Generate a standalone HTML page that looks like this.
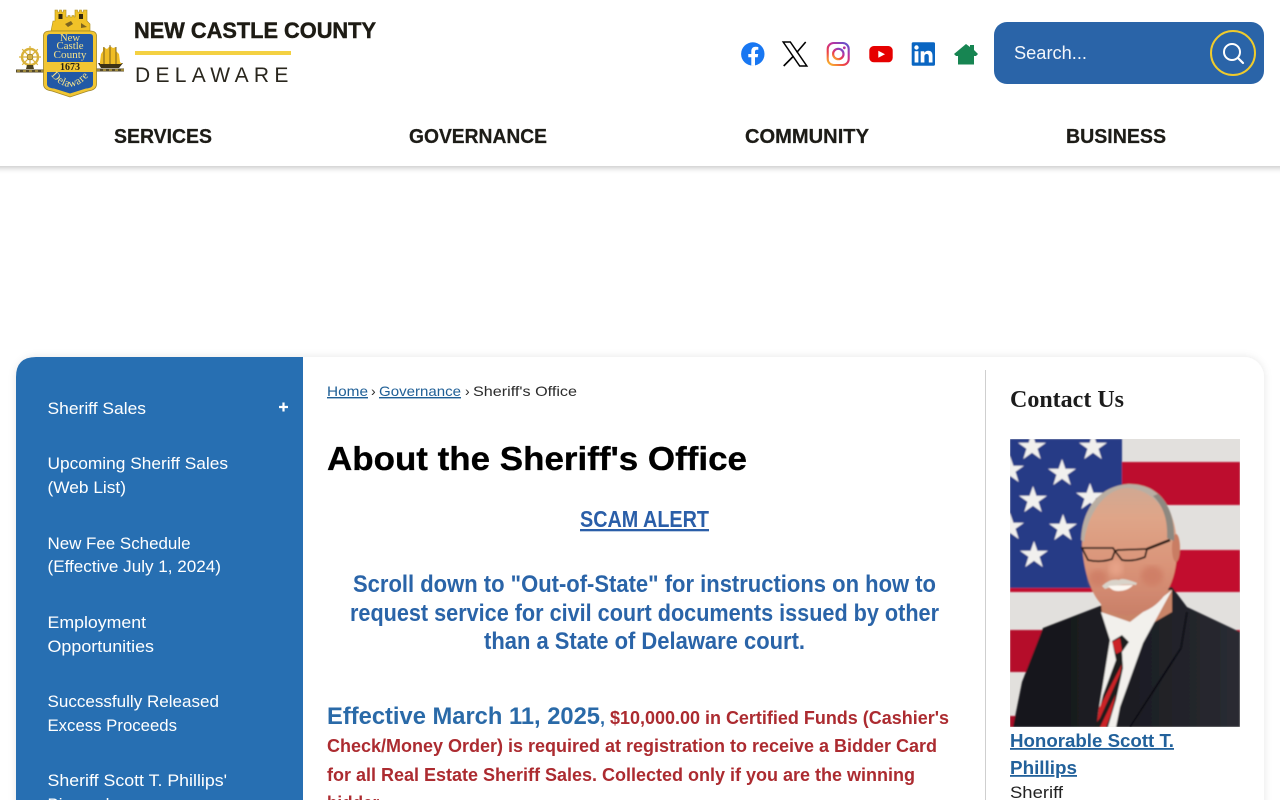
<!DOCTYPE html>
<html lang="en">
<head>
<meta charset="utf-8">
<title>About the Sheriff's Office</title>
<style>
html,body{margin:0;padding:0;width:1280px;height:800px;overflow:hidden;background:#fff}
svg{display:block;position:absolute;left:0;top:0}
text{font-family:"Liberation Sans",sans-serif}
.nav{font-size:20px;font-weight:700;fill:#1d1c17;stroke:#1d1c17;stroke-width:.25px}
.side{font-size:16.5px;fill:#fff}
.crumb{font-size:14px;fill:#2b2b2b}
.link{fill:#1f5f96;text-decoration:underline}
.scroll{font-size:24px;font-weight:700;fill:#2a64a8}
.red{font-size:18px;font-weight:700;fill:#ac2b30}
.hon{font-size:18px;font-weight:700;fill:#22619b;text-decoration:underline}
.serif{font-family:"Liberation Serif",serif}
</style>
</head>
<body>
<svg width="1280" height="800" viewBox="0 0 1280 800" xmlns="http://www.w3.org/2000/svg">
<defs>
<filter id="sh" x="-5%" y="-20%" width="110%" height="140%"><feDropShadow dx="0" dy="2" stdDeviation="3" flood-color="#000" flood-opacity=".22"/></filter>
<filter id="sh2" x="-3%" y="-5%" width="106%" height="110%"><feDropShadow dx="0" dy="0" stdDeviation="4" flood-color="#000" flood-opacity=".10"/></filter>
<filter id="b1"><feGaussianBlur stdDeviation=".8"/></filter>
<filter id="b2"><feGaussianBlur stdDeviation="3"/></filter>
<linearGradient id="ig" x1="0.1" y1="1" x2="0.8" y2="0"><stop offset="0" stop-color="#f9b52d"/><stop offset=".35" stop-color="#ee3f45"/><stop offset=".7" stop-color="#c0309b"/><stop offset="1" stop-color="#6a4fc8"/></linearGradient>
<linearGradient id="face" x1="0" y1="0" x2="0" y2="1"><stop offset="0" stop-color="#cfa893"/><stop offset=".25" stop-color="#dfa588"/><stop offset=".65" stop-color="#d99277"/><stop offset="1" stop-color="#c97f68"/></linearGradient>
<linearGradient id="suit" x1="0" y1="0" x2="1" y2="0"><stop offset="0" stop-color="#15151a"/><stop offset=".6" stop-color="#1e1f25"/><stop offset="1" stop-color="#2a2b32"/></linearGradient>
<clipPath id="photo"><rect x="1010" y="439" width="230" height="288"/></clipPath>
<path id="star" d="M0-14 3.400-4.300 14-4.300 5.500 1.800 8.700 12 0 5.800-8.700 12-5.500 1.800-14-4.300-3.400-4.300Z"/>
<path id="curve" d="M50 74Q70 101 93 71"/>
</defs>

<!-- header -->
<rect x="-10" y="-10" width="1300" height="176" fill="#fff" filter="url(#sh)"/>

<!-- logo -->
<g>
  <rect x="16" y="69.500" width="28" height="3" fill="#54492a"/>
  <path d="M17 71H43" stroke="#e8c64a" stroke-width="1" stroke-dasharray="3 3"/>
  <rect x="96" y="68.500" width="28" height="3" fill="#54492a"/>
  <path d="M97 70H124" stroke="#e8c64a" stroke-width="1" stroke-dasharray="3 3"/>
  <g fill="none" stroke="#d9b23a">
    <circle cx="30" cy="57" r="8" stroke-width="2.400"/>
    <circle cx="30" cy="57" r="2.600" stroke-width="1.400" stroke="#65582a"/>
    <path d="M30 46V68M19 57H41M22.200 49.200 37.800 64.800M37.800 49.200 22.200 64.800" stroke-width="1.200"/>
  </g>
  <path d="M26 69h8l-1-4h-6Z" fill="#4a4020"/>
  <path d="M98 63h25l-4 5h-18Z" fill="#3d3216"/>
  <path d="M100 62 101 54 103 51 103 47 107 49 110 46 113 48 116 47 116 51 119 54 120 62 122 64H100Z" fill="#f0bd25"/>
  <path d="M104 47V64M110 45V64M116 47V64" stroke="#59481c" stroke-width=".8"/>
  <path d="M51 31 53 21H55V10h2.500v2h2v-2h2v2h2v-2H66V17h2v-1.500h2v1.500h2v-1.500h2V17h1V10h2.500v2h2v-2h2v2h2v-2H87V21L90 24V31Z" fill="#f0c228" stroke="#a98c1d" stroke-width=".6"/>
  <rect x="58.500" y="14" width="4" height="5" fill="#33290f"/><rect x="79" y="14" width="4" height="5" fill="#33290f"/>
  <path d="M65 24l6-3 2 3-5 3ZM81 23l6 4-6 1Z" fill="#7b6420"/>
  <path d="M43.500 36Q43.500 31 50 31H90Q96.500 31 96.500 36V84Q96.500 90 88 91L70 97 52 91Q43.500 90 43.500 84Z" fill="#f2c632" stroke="#9f8526" stroke-width=".8"/>
  <path d="M47 37Q47 34 50 34H90Q93 34 93 37V62H47Z" fill="#2259a6"/>
  <path d="M47 72H93V84Q93 88 86 88.500L70 93.500 54 88.500Q47 88 47 84Z" fill="#2259a6"/>
  <g text-anchor="middle">
    <text x="70" y="41" class="serif" font-size="10.500" fill="#f4e28b" textLength="20" lengthAdjust="spacingAndGlyphs">New</text>
    <text x="70" y="49" class="serif" font-size="10.500" fill="#f4e28b" textLength="27" lengthAdjust="spacingAndGlyphs">Castle</text>
    <text x="70" y="58" class="serif" font-size="10.500" fill="#f4e28b" textLength="33" lengthAdjust="spacingAndGlyphs">County</text>
    <text x="70" y="70" class="serif" font-size="10" font-weight="700" fill="#2a2414" textLength="20" lengthAdjust="spacingAndGlyphs">1673</text>
  </g>
  <text class="serif" font-size="11" fill="#f4e28b" letter-spacing=".4"><textPath href="#curve" startOffset="3%">Delaware</textPath></text>

  <text x="134" y="38" font-size="22" font-weight="700" fill="#1d1b14" stroke="#1d1b14" stroke-width=".45" textLength="242" lengthAdjust="spacingAndGlyphs">NEW CASTLE COUNTY</text>
  <rect x="135" y="51" width="156" height="4" fill="#f4d142"/>
  <text x="135" y="82" font-size="21" fill="#29261d" letter-spacing="5.300">DELAWARE</text>
</g>

<!-- social icons -->
<circle cx="752.800" cy="54" r="11.700" fill="#1877f2"/>
<path d="M751.300 65.700V57.300H748.300V54H751.300V51.300C751.300 48.300 753 46.700 755.700 46.700L758.300 47V49.800H756.900C755.500 49.800 755 50.700 755 51.600V54H758.200L757.700 57.300H755V65.700Z" fill="#fff"/>
<path d="M783.200 42H790.300L806.800 66H799.700Z" fill="none" stroke="#000" stroke-width="1.500"/>
<path d="M805.700 42 796.700 52.500M793.600 56 783.700 66" fill="none" stroke="#000" stroke-width="1.600"/>
<rect x="827.700" y="43" width="21" height="22" rx="6" fill="none" stroke="url(#ig)" stroke-width="2.100"/>
<circle cx="838.300" cy="54" r="5.200" fill="none" stroke="url(#ig)" stroke-width="2.200"/>
<circle cx="844.300" cy="47.800" r="1.400" fill="#b6319f"/>
<rect x="869.300" y="46" width="23.400" height="16.300" rx="4.500" fill="#e60000"/>
<path d="M878.300 50.700 885 54.200 878.300 57.700Z" fill="#fff"/>
<rect x="911.700" y="42.300" width="23.300" height="23.400" rx="1.500" fill="#0a66c2"/>
<rect x="914.600" y="51.200" width="3.800" height="11.300" fill="#fff"/>
<circle cx="916.500" cy="47.500" r="2.200" fill="#fff"/>
<path d="M920.700 51.200H924.300V52.900C925.100 51.600 926.400 50.800 928.200 50.800 931.600 50.800 932.500 53 932.500 56V62.500H928.800V56.700C928.800 55.200 928.300 54 926.700 54 925 54 924.400 55.200 924.400 56.700V62.500H920.700Z" fill="#fff"/>
<path d="M966 44 970 47V45H974V50L978 54 976 56H974V64.500H958V56H956L954 54Z" fill="#178552"/>

<!-- search -->
<rect x="994" y="22" width="270" height="62" rx="13" fill="#2a64a8"/>
<text x="1014" y="59" font-size="18" fill="#f3f6fa" textLength="73" lengthAdjust="spacingAndGlyphs">Search...</text>
<circle cx="1233" cy="53" r="22" fill="none" stroke="#f0cb2c" stroke-width="2"/>
<circle cx="1232" cy="52" r="8" fill="none" stroke="#fff" stroke-width="2"/>
<path d="M1238 58 1243 63" stroke="#fff" stroke-width="2.200" stroke-linecap="round"/>

<!-- nav -->
<text class="nav" x="114" y="143" textLength="98" lengthAdjust="spacingAndGlyphs">SERVICES</text>
<text class="nav" x="409" y="143" textLength="138" lengthAdjust="spacingAndGlyphs">GOVERNANCE</text>
<text class="nav" x="745" y="143" textLength="124" lengthAdjust="spacingAndGlyphs">COMMUNITY</text>
<text class="nav" x="1066" y="143" textLength="100" lengthAdjust="spacingAndGlyphs">BUSINESS</text>

<!-- main card -->
<rect x="16" y="357" width="1248" height="480" rx="20" fill="#fff" filter="url(#sh2)"/>
<path d="M303 357H36Q16 357 16 377V810H303Z" fill="#276fb2"/>
<path d="M985.500 370V800" stroke="#cfcfcf" stroke-width="1"/>

<!-- sidebar -->
<text class="side" x="47.500" y="414" textLength="98.500" lengthAdjust="spacingAndGlyphs">Sheriff Sales</text>
<path d="M279 407H288M283.500 402.500V411.500" stroke="#fff" stroke-width="2.200"/>
<text class="side" x="47.500" y="469" textLength="180.500" lengthAdjust="spacingAndGlyphs">Upcoming Sheriff Sales</text>
<text class="side" x="47.500" y="493" textLength="78.500" lengthAdjust="spacingAndGlyphs">(Web List)</text>
<text class="side" x="47.500" y="549" textLength="143" lengthAdjust="spacingAndGlyphs">New Fee Schedule</text>
<text class="side" x="47.500" y="572" textLength="173.500" lengthAdjust="spacingAndGlyphs">(Effective July 1, 2024)</text>
<text class="side" x="47.500" y="628" textLength="98.500" lengthAdjust="spacingAndGlyphs">Employment</text>
<text class="side" x="47.500" y="652" textLength="106.500" lengthAdjust="spacingAndGlyphs">Opportunities</text>
<text class="side" x="47.500" y="707" textLength="171.500" lengthAdjust="spacingAndGlyphs">Successfully Released</text>
<text class="side" x="47.500" y="731" textLength="129.500" lengthAdjust="spacingAndGlyphs">Excess Proceeds</text>
<text class="side" x="47.500" y="786" textLength="179.500" lengthAdjust="spacingAndGlyphs">Sheriff Scott T. Phillips'</text>
<text class="side" x="47.500" y="810" textLength="76" lengthAdjust="spacingAndGlyphs">Biography</text>

<!-- breadcrumb -->
<text class="crumb link" x="327" y="396" textLength="41" lengthAdjust="spacingAndGlyphs">Home</text>
<text class="crumb" x="371" y="396">›</text>
<text class="crumb link" x="379" y="396" textLength="82" lengthAdjust="spacingAndGlyphs">Governance</text>
<text class="crumb" x="465" y="396">›</text>
<text class="crumb" x="473" y="396" textLength="104" lengthAdjust="spacingAndGlyphs">Sheriff's Office</text>

<!-- content -->
<text x="327" y="470" font-size="33" font-weight="700" fill="#000" stroke="#000" stroke-width=".3" textLength="420" lengthAdjust="spacingAndGlyphs">About the Sheriff's Office</text>
<text x="580" y="527" font-size="23" font-weight="700" fill="#2a5ea8" text-decoration="underline" textLength="129" lengthAdjust="spacingAndGlyphs">SCAM ALERT</text>
<text class="scroll" x="353" y="592" textLength="583" lengthAdjust="spacingAndGlyphs">Scroll down to "Out-of-State" for instructions on how to</text>
<text class="scroll" x="350" y="621" textLength="589" lengthAdjust="spacingAndGlyphs">request service for civil court documents issued by other</text>
<text class="scroll" x="484" y="649" textLength="321" lengthAdjust="spacingAndGlyphs">than a State of Delaware court.</text>

<text x="327" y="724" font-size="24" font-weight="700" fill="#2a6aa8" textLength="273" lengthAdjust="spacingAndGlyphs">Effective March 11, 2025</text>
<text x="600" y="724" font-size="18" font-weight="700" fill="#2a6aa8">,</text>
<text class="red" x="610" y="724" textLength="339" lengthAdjust="spacingAndGlyphs">$10,000.00 in Certified Funds (Cashier's</text>
<text class="red" x="327" y="752" textLength="610" lengthAdjust="spacingAndGlyphs">Check/Money Order) is required at registration to receive a Bidder Card</text>
<text class="red" x="327" y="781" textLength="588" lengthAdjust="spacingAndGlyphs">for all Real Estate Sheriff Sales. Collected only if you are the winning</text>
<text class="red" x="327" y="809" textLength="56" lengthAdjust="spacingAndGlyphs">bidder.</text>

<!-- right column -->
<text class="serif" x="1010" y="407" font-size="24" font-weight="700" fill="#1c1c1c" textLength="114" lengthAdjust="spacingAndGlyphs" style="font-family:'Liberation Serif',serif">Contact Us</text>

<!-- portrait -->
<g clip-path="url(#photo)">
  <rect x="1010" y="439" width="230" height="288" fill="#e2e0dd"/>
  <g filter="url(#b1)">
    <rect x="1010" y="462" width="230" height="43" fill="#bd0a2e"/>
    <rect x="1010" y="550" width="230" height="42" fill="#c2102f"/>
    <rect x="1010" y="630" width="230" height="42" fill="#b50d2b"/>
    <rect x="1010" y="716" width="230" height="11" fill="#a90f28"/>
    <rect x="1010" y="439" width="112" height="149" fill="#263a86"/>
    <g fill="#f1f0ee">
      <use href="#star" x="1032" y="447"/><use href="#star" x="1093" y="447"/>
      <use href="#star" x="1062" y="473"/><use href="#star" x="1033" y="500"/>
      <use href="#star" x="1090" y="497"/><use href="#star" x="1063" y="528"/>
      <use href="#star" x="1034" y="555"/><use href="#star" x="1010" y="470"/>
      <use href="#star" x="1010" y="527"/>
    </g>
    <!-- suit -->
    <path d="M1013 727 1022 682 1043 628 1100 606 1172 587 1187 607 1240 632V727Z" fill="url(#suit)"/>
    <path d="M1187 612 1181 648 1130 727" fill="none" stroke="#0f0f13" stroke-width="2"/>
    <!-- neck -->
    <path d="M1100 590H1172V612L1132 635 1102 615Z" fill="#c98468"/>
    <!-- shirt -->
    <path d="M1101 612 1130 622 1172 590 1143 643 1120 707 1116 727H1096L1110 640Z" fill="#f2f0ec"/>
    <!-- tie -->
    <path d="M1112 641 1122 635 1129 642 1122 652 1123 668 1116 700 1108 727H1095L1103 695 1116 660Z" fill="#1f1d1c"/>
    <path d="M1112 642 1120 638 1122 651 1116 654ZM1122 664 1120 674 1100 718 1097 722 1099 708ZM1116 694 1111 714 1106 727H1100Z" fill="#cb2228"/>
    <!-- head -->
    <path d="M1082 545C1082 505 1105 485 1130 485 1160 485 1177 510 1177 550 1177 588 1158 615 1125 615 1100 615 1085 588 1082 545Z" fill="url(#face)"/>
    <ellipse cx="1176" cy="548" rx="4" ry="14" fill="#c97d64"/>
    <!-- hair -->
    <path d="M1081 540C1082 508 1100 486 1128 484 1156 483 1176 504 1174 540L1170 540C1170 515 1158 491 1128 488 1106 488 1088 512 1084 542Z" fill="#b9aea3"/>
    <path d="M1158 494C1170 505 1175 522 1174 541L1167 538C1168 522 1164 506 1153 496Z" fill="#8d8880"/>
    <!-- cheeks -->
    <ellipse cx="1098" cy="578" rx="9" ry="8" fill="#cf7f66" filter="url(#b2)"/>
    <ellipse cx="1152" cy="576" rx="11" ry="10" fill="#cf7f66" filter="url(#b2)"/>
    <ellipse cx="1116" cy="568" rx="7" ry="8" fill="#e6a287" filter="url(#b2)"/>
    <!-- mustache and mouth -->
    <path d="M1102 586Q1110 578 1119 580 1122 577 1137 583L1136 585Q1120 583 1105 589Z" fill="#d9d3c9"/>
    <path d="M1108 586Q1120 585 1133 585 1128 591 1118 591 1112 591 1108 586Z" fill="#fbf6f0"/>
    <!-- glasses -->
    <g fill="none" stroke="#2b1d18">
      <path d="M1082 548H1113L1115 551 1112 559Q1100 563 1088 560Z" stroke-width="1.800"/>
      <path d="M1115 551 1118 550 1147 549 1145 557Q1133 562 1122 560Z" stroke-width="1.800"/>
      <path d="M1147 549 1170 540" stroke-width="2.600"/>
    </g>
  </g>
</g>

<text class="hon" x="1010" y="747" textLength="164" lengthAdjust="spacingAndGlyphs">Honorable Scott T.</text>
<text class="hon" x="1010" y="774" textLength="67" lengthAdjust="spacingAndGlyphs">Phillips</text>
<text x="1010" y="798" font-size="16.500" fill="#222" textLength="53" lengthAdjust="spacingAndGlyphs">Sheriff</text>
</svg>
</body>
</html>
